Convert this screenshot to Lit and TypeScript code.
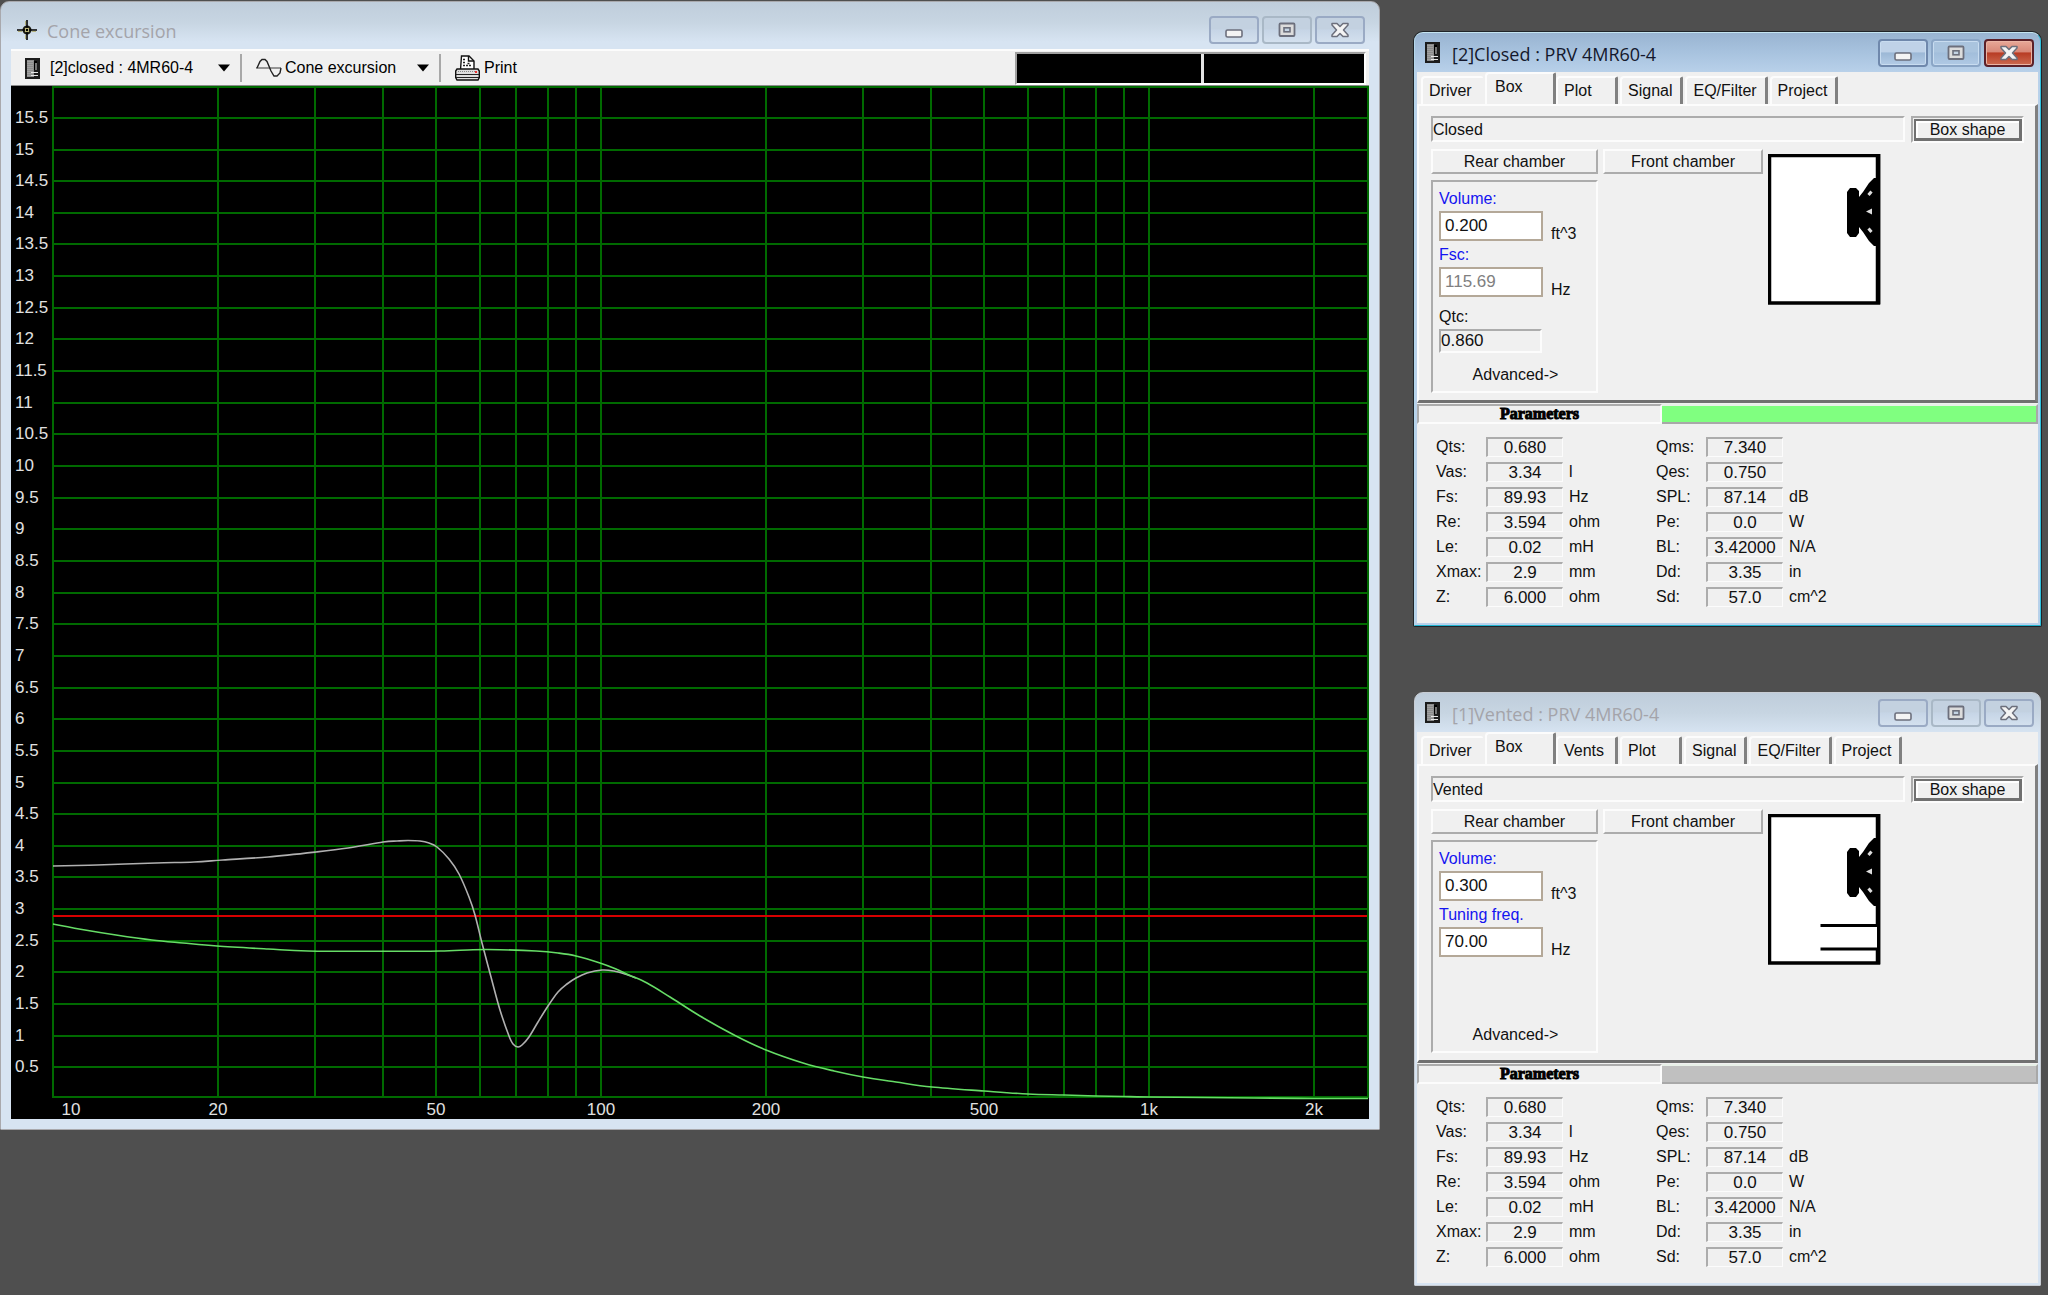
import { LitElement, html, svg, css, nothing } from "lit";
import { customElement, property } from "lit/decorators.js";
import { classMap } from "lit/directives/class-map.js";

type Point = [number, number];

interface Param {
  label: string;
  value: string;
  unit: string;
}

const boxIcon = html`<svg width="15" height="21" viewBox="0 0 15 21" aria-hidden="true">
  <rect width="15" height="21" fill="#1c1c1c" />
  <rect x="2" y="2" width="7" height="17" fill="#8c8c8c" />
  <path d="M3 3v15M5 3v15M7 3v15" stroke="#b4b4b4" stroke-dasharray="1 1" />
  <rect x="9" y="3" width="3" height="9" fill="#000" />
  <path d="M11 5v7M6 14.5h7M6 17.5h7" stroke="#e8e8e8" stroke-width="1" />
</svg>`;

const targetIcon = html`<svg width="20" height="20" viewBox="0 0 20 20" aria-hidden="true">
  <circle cx="10" cy="10" r="3.5" fill="#9a9660" stroke="#1a1a10" stroke-width="2" />
  <path d="M10 0v20M0 10h20" stroke="#000" stroke-width="1.6" />
  <path d="M8.6 1v4M8.6 15v4M1 11.4h4M15 11.4h4" stroke="#a8a050" stroke-width="0.8" />
  <rect x="8" y="8" width="4" height="4" fill="#b8b478" />
  <rect x="9" y="9" width="2" height="2" fill="#000" />
</svg>`;

const arrowIcon = html`<svg class="arrow" width="12" height="8" viewBox="0 0 12 8" aria-hidden="true">
  <path d="M0 0.5h12L6 7.5z" fill="#000" />
</svg>`;

const sineIcon = html`<svg width="26" height="20" viewBox="0 0 26 20" aria-hidden="true">
  <path d="M0 10h25" stroke="#777" stroke-width="1.3" />
  <path d="M1 10L4 3.500L6 1.500H9L11 3.500L15 13L18 18H21L24 15L25 10" fill="none" stroke="#222" stroke-width="1.400" />
</svg>`;

const printIcon = html`<svg width="25" height="26" viewBox="0 0 25 26" aria-hidden="true">
  <path d="M5.500 15L6.500 1H14L19 6V15z" fill="#fff" stroke="#111" stroke-width="1.400" />
  <path d="M13.500 1V6H19" fill="none" stroke="#111" stroke-width="1.400" />
  <path d="M8 4.500h3M8 7.500h3M8 10.500h8M12.500 8.500h3" stroke="#222" stroke-width="1.400" stroke-dasharray="2 1" />
  <path d="M2 14h21l1.300 2v6.500l-1.300 2.500H2L0.700 22.500v-6.500z" fill="#ddd" stroke="#111" stroke-width="1.400" />
  <path d="M3 16.500h18" stroke="#888" stroke-dasharray="1 1" />
  <path d="M1 19.500h23M1 22.500h23" stroke="#222" stroke-width="1.200" />
  <rect x="20" y="16" width="2" height="2" fill="#f03030" />
</svg>`;

@customElement("mdi-window")
export class MdiWindow extends LitElement {
  @property() heading = "";
  @property({ type: Boolean, reflect: true }) active = false;
  @property({ type: Boolean, reflect: true }) wide = false;

  static styles = css`
    :host {
      display: block;
      box-sizing: border-box;
      border: 1px solid #c8cdd4;
      border-radius: 9px 9px 1px 1px;
      background: linear-gradient(#bfcddb, #c7d5e2 20px, #d7e4f2 40px);
      padding: 0 2px 2px;
      overflow: hidden;
    }
    :host([wide]) {
      padding: 0 10px 10px;
      border-color: #a9a9ad;
    }
    :host([active]) {
      background: linear-gradient(#99b4d1, #a8c3df 20px, #b9d1ea 40px);
      border-color: #c4e4f0 #2ec0dc #22b4d0 #b4d8ec;
      box-shadow: 0 0 0 1px #202428;
    }
    .titlebar {
      display: flex;
      align-items: center;
      height: 39px;
      padding: 0 4px 0 8px;
    }
    :host([wide]) .titlebar {
      height: 47px;
      padding: 8px 4px 0 6px;
      box-sizing: border-box;
    }
    .title {
      flex: 1;
      margin: 0;
      padding: 3px 0 0 12px;
      font: 400 18px/24px "Open Sans", sans-serif;
      color: #a4a4aa;
      white-space: nowrap;
    }
    :host([wide]) .title {
      padding-left: 10px;
    }
    :host([active]) .title {
      color: #14182c;
    }
    .controls {
      display: flex;
      gap: 3px;
    }
    button {
      width: 50px;
      height: 28px;
      padding: 0;
      display: grid;
      place-items: center;
      border: 2px solid #9aaac4;
      border-radius: 4px;
      background: linear-gradient(#c3d1e0 45%, #c6d5e6 50%, #d3e0ee);
    }
    button.max {
      border-color: #a9b8c6;
    }
    :host([active]) button {
      border-color: #6f88ac;
      background: linear-gradient(#bfd2e8 45%, #9cb8d6 50%, #b4cce6);
      box-shadow: inset 0 0 0 1px #c8dcf0;
    }
    :host([active]) button.max {
      border-color: #8ba6c6;
      background: linear-gradient(#aac4de 45%, #a2bedb 50%, #b0c9e4);
    }
    :host([active]) button.close {
      border-color: #5c2028;
      background: linear-gradient(#e8a898, #d88878 45%, #b83c24 50%, #cc6a50);
      box-shadow: inset 0 0 0 1px #eab4a4;
    }
  `;

  render() {
    return html`
      <header class="titlebar">
        ${this.wide ? targetIcon : boxIcon}
        <h2 class="title">${this.heading}</h2>
        <div class="controls">
          <button type="button" class="min" aria-label="Minimize">
            <svg width="18" height="18" viewBox="0 0 18 18">
              <rect x="1" y="9" width="16" height="7" rx="1.500" fill="#f4f4f4" stroke="#6c6f7c" stroke-width="1.600" />
            </svg>
          </button>
          <button type="button" class="max" aria-label="Maximize">
            <svg width="18" height="18" viewBox="0 0 18 18">
              <rect x="1.500" y="2.500" width="15" height="12.500" rx="1" fill="#dcdcdc" stroke="#6c6f7c" stroke-width="1.800" />
              <rect x="6" y="6.800" width="6" height="4" fill="#c4d4e4" stroke="#6c6f7c" stroke-width="1.600" />
            </svg>
          </button>
          <button type="button" class="close" aria-label="Close">
            <svg width="18" height="18" viewBox="0 0 18 18">
              <path
                d="M1 2.500h5l3 3 3-3h5v1.500l-4.500 5 4.500 5v1.500h-5l-3-3-3 3H1V14l4.500-5L1 4z"
                fill="#f4f4f4"
                stroke="#6c6f7c"
                stroke-width="1.500"
                stroke-linejoin="round"
              />
            </svg>
          </button>
        </div>
      </header>
      <slot></slot>
    `;
  }
}

const ventedCurve: Point[] = [
  [53, 866], [97, 865], [156, 863], [194, 862], [223, 860], [268, 857], [316, 852], [348, 848],
  [383, 842], [397, 841], [408, 840.500], [420, 841], [429, 843], [437, 847], [449, 859], [459, 874],
  [469, 897], [475, 915], [482, 943], [491, 977], [500, 1010], [509, 1036], [513, 1044],
  [518, 1047], [522, 1045], [529, 1037], [538, 1022], [548, 1006], [558, 992], [567, 984],
  [576, 978], [587, 973], [602, 970], [614, 971], [625, 974], [636, 978],
];

const closedCurve: Point[] = [
  [53, 924], [85, 930], [116, 935], [152, 940], [183, 943], [217, 946], [268, 949], [308, 951],
  [384, 951.300], [440, 951], [473, 949.700], [500, 949.700], [536, 951], [558, 953], [576, 956], [600, 963],
  [616, 969], [629, 975], [647, 983], [670, 997], [700, 1016], [736, 1036], [766, 1050],
  [803, 1063], [834, 1071], [863, 1077], [896, 1082], [932, 1087], [984, 1091], [1028, 1094],
  [1064, 1095], [1096, 1096], [1124, 1096.500], [1149, 1097], [1254, 1098], [1314, 1098.500], [1368, 1098.500],
];

/** Catmull-Rom spline through the points, written as cubic Béziers. */
function smoothPath(points: Point[]): string {
  let d = `M${points[0][0]} ${points[0][1]}`;
  for (let i = 0; i < points.length - 1; i++) {
    const a = points[Math.max(i - 1, 0)];
    const b = points[i];
    const c = points[i + 1];
    const e = points[Math.min(i + 2, points.length - 1)];
    d += `C${b[0] + (c[0] - a[0]) / 6} ${b[1] + (c[1] - a[1]) / 6} ${c[0] - (e[0] - b[0]) / 6} ${
      c[1] - (e[1] - b[1]) / 6
    } ${c[0]} ${c[1]}`;
  }
  return d;
}

@customElement("excursion-plot")
export class ExcursionPlot extends LitElement {
  static styles = css`
    :host {
      display: block;
      background: #000;
    }
    .plot {
      display: block;
      width: 100%;
      height: auto;
    }
    .grid {
      stroke: #006a00;
      stroke-width: 2;
      shape-rendering: crispEdges;
    }
    .limit {
      stroke: #d80000;
      stroke-width: 2;
      shape-rendering: crispEdges;
    }
    .curve {
      fill: none;
      stroke-width: 1.6;
    }
    .vented {
      stroke: #b0b0b0;
    }
    .closed {
      stroke: #66dc66;
    }
    text {
      font: 17px "Liberation Sans", Arial, sans-serif;
      fill: #e0e0e0;
    }
    .freq {
      text-anchor: middle;
    }
  `;

  private x(freq: number) {
    return Math.round(53 + 548.2 * Math.log10(freq / 10));
  }

  private y(mm: number) {
    return mm === 0 ? 1097 : Math.round(1099 - mm * 63.3);
  }

  render() {
    const freqs = [10, 20, 30, 40, 50, 60, 70, 80, 90, 100, 200, 300, 400, 500, 600, 700, 800, 900, 1000, 2000];
    const levels = Array.from({ length: 33 }, (_, i) => i / 2);
    const freqLabels: [number, string][] = [
      [20, "20"], [50, "50"], [100, "100"], [200, "200"], [500, "500"], [1000, "1k"], [2000, "2k"],
    ];
    return html`
      <svg class="plot" viewBox="11 86 1358 1033" role="img" aria-label="Cone excursion in mm against frequency in Hz">
        <g class="grid">
          ${freqs.map((f) => svg`<line x1=${this.x(f)} x2=${this.x(f)} y1="87" y2="1098" />`)}
          <line x1="1368" x2="1368" y1="87" y2="1098" />
          ${levels.map((v) => {
            const y = v === 16 ? 87 : this.y(v);
            return svg`<line x1="52" x2="1369" y1=${y} y2=${y} />`;
          })}
        </g>
        <line class="limit" x1="53" x2="1367" y1="916" y2="916" />
        <path class="curve vented" d=${smoothPath(ventedCurve)} />
        <path class="curve closed" d=${smoothPath(closedCurve)} />
        ${levels.slice(1, 32).map((v) => svg`<text x="15" y=${this.y(v) + 5}>${v}</text>`)}
        <text class="freq" x="71" y="1115">10</text>
        ${freqLabels.map(([f, t]) => svg`<text class="freq" x=${this.x(f)} y="1115">${t}</text>`)}
      </svg>
    `;
  }
}

@customElement("plot-toolbar")
export class PlotToolbar extends LitElement {
  static styles = css`
    :host {
      display: flex;
      align-items: center;
      box-sizing: border-box;
      height: 37px;
      padding: 0 3px 0 14px;
      background: #f0f0f0;
      border-top: 2px solid #fcfcfc;
      border-bottom: 1px solid #8c8c8c;
      font: 16px/20px "Liberation Sans", Arial, sans-serif;
      color: #000;
    }
    .picker {
      display: flex;
      align-items: center;
    }
    .picker svg {
      flex: none;
    }
    select {
      appearance: none;
      border: 0;
      padding: 0;
      background: none;
      font: inherit;
      color: inherit;
    }
    .project select {
      width: 168px;
      margin-left: 10px;
    }
    .quantity select {
      width: 132px;
      margin-left: 3px;
    }
    .sep {
      width: 2px;
      height: 28px;
      margin: 0 14px 0 10px;
      background: #a8a8a8;
    }
    .print {
      display: flex;
      align-items: center;
      gap: 4px;
      padding: 0;
      border: 0;
      background: none;
      font: inherit;
      color: inherit;
    }
    .meters {
      flex: none;
      display: grid;
      grid-template-columns: 184px 160px;
      gap: 3px;
      box-sizing: border-box;
      height: 33px;
      margin-left: auto;
      background: #e4e4e4;
      border: 2px solid;
      border-color: #a0a0a0 #fff #fff #a0a0a0;
    }
    .meter {
      background: #000;
    }
  `;

  render() {
    return html`
      <label class="picker project">
        ${boxIcon}
        <select aria-label="Project">
          <option>[2]closed : 4MR60-4</option>
          <option>[1]vented : 4MR60-4</option>
        </select>
        ${arrowIcon}
      </label>
      <span class="sep"></span>
      <label class="picker quantity">
        ${sineIcon}
        <select aria-label="Plot type">
          <option>Cone excursion</option>
        </select>
        ${arrowIcon}
      </label>
      <span class="sep"></span>
      <button type="button" class="print">${printIcon}Print</button>
      <div class="meters"><span class="meter"></span><span class="meter"></span></div>
    `;
  }
}

const params: Param[][] = [
  [
    { label: "Qts:", value: "0.680", unit: "" },
    { label: "Vas:", value: "3.34", unit: "l" },
    { label: "Fs:", value: "89.93", unit: "Hz" },
    { label: "Re:", value: "3.594", unit: "ohm" },
    { label: "Le:", value: "0.02", unit: "mH" },
    { label: "Xmax:", value: "2.9", unit: "mm" },
    { label: "Z:", value: "6.000", unit: "ohm" },
  ],
  [
    { label: "Qms:", value: "7.340", unit: "" },
    { label: "Qes:", value: "0.750", unit: "" },
    { label: "SPL:", value: "87.14", unit: "dB" },
    { label: "Pe:", value: "0.0", unit: "W" },
    { label: "BL:", value: "3.42000", unit: "N/A" },
    { label: "Dd:", value: "3.35", unit: "in" },
    { label: "Sd:", value: "57.0", unit: "cm^2" },
  ],
];

@customElement("box-panel")
export class BoxPanel extends LitElement {
  @property({ type: Boolean }) vented = false;

  static styles = css`
    :host {
      display: block;
      background: #f0f0f0;
      font: 16px/20px "Liberation Sans", Arial, sans-serif;
      color: #111;
    }
    * {
      box-sizing: border-box;
    }
    button,
    input {
      font: inherit;
      color: inherit;
      margin: 0;
    }
    .tabs {
      display: flex;
      align-items: flex-end;
      gap: 2px;
      height: 32px;
      padding: 0 4px;
    }
    .tab {
      height: 28px;
      min-width: 62px;
      padding: 0 8px 0 6px;
      text-align: left;
      background: #f0f0f0;
      border: solid;
      border-width: 2px 3px 0 2px;
      border-color: #fcfcfc #808080 #fcfcfc #fcfcfc;
      border-radius: 4px 2px 0 0;
      white-space: nowrap;
    }
    .tab.first {
      border-right: 0;
    }
    .tab.selected {
      height: 32px;
      width: 71px;
      margin-right: -2px;
      padding: 0 8px 4px;
    }
    .page {
      height: 299px;
      padding: 10px 11px 0 12px;
      border: solid;
      border-width: 2px 3px 3px 2px;
      border-color: #fcfcfc #808080 #707070 #fcfcfc;
    }
    .row {
      display: flex;
      gap: 6px;
    }
    .sunken {
      border: 2px solid;
      border-color: #acacac #fcfcfc #fcfcfc #acacac;
      background: #f0f0f0;
    }
    .name {
      flex: 1;
      min-width: 0;
      height: 26px;
      padding: 2px 0 0;
    }
    .shape {
      width: 113px;
      height: 27px;
      padding: 1px 0 0 1px;
    }
    .shape button {
      display: block;
      width: 100%;
      height: 100%;
      padding: 0;
      line-height: 18px;
      background: #f0f0f0;
      border: solid #707070;
      border-width: 2px 3px 3px 2px;
      box-shadow: inset 1px 1px 0 1px #fff;
    }
    .body {
      display: grid;
      grid-template-columns: 167px 160px 1fr;
      gap: 5px;
      margin-top: 6px;
    }
    .chamber {
      display: block;
      height: 25px;
      width: 100%;
      padding: 0;
      background: #f0f0f0;
      border: 2px solid;
      border-color: #fcfcfc #acacac #acacac #fcfcfc;
    }
    .group {
      height: 213px;
      margin-top: 6px;
      padding: 7px 6px 0;
      display: flex;
      flex-direction: column;
    }
    .label {
      height: 22px;
      color: #1414f0;
    }
    .label.plain {
      color: #111;
      margin-top: 6px;
    }
    .entry {
      display: flex;
      align-items: flex-end;
      gap: 8px;
      height: 30px;
      margin-bottom: 4px;
    }
    .entry input {
      width: 104px;
      height: 30px;
      padding: 0 0 0 4px;
      border: 2px solid #b4a898;
      background: #fff;
      font-size: 17px;
    }
    .entry input:disabled {
      color: #808080;
    }
    .entry span {
      line-height: 14px;
    }
    .readout {
      display: block;
      width: 103px;
      height: 24px;
      font-size: 17px;
    }
    .advanced {
      margin-top: auto;
      margin-bottom: 6px;
      padding: 0 0 0 2px;
      border: 0;
      background: none;
    }
    .drawing {
      display: block;
      margin-top: 5px;
    }
    .strip {
      display: grid;
      grid-template-columns: 245px 1fr;
      height: 20px;
      margin-top: 1px;
    }
    .strip h3 {
      margin: 0;
      font: bold 16px/15px "Liberation Serif", "Times New Roman", serif;
      -webkit-text-stroke: 1px #000;
      text-align: center;
      color: #000;
    }
    .swatch {
      background: #80ff80;
      border: solid;
      border-width: 2px 2px 2px 0;
      border-color: #e8f0e8 #a8a8a8 #a8a8a8;
    }
    .swatch.grey {
      background: #c0c0c0;
    }
    .params {
      display: flex;
      gap: 20px;
      padding: 13px 18px 16px 19px;
    }
    .column {
      width: 200px;
      display: grid;
      grid-template-columns: 50px 77px 1fr;
      column-gap: 0;
      row-gap: 5px;
    }
    .column .val {
      height: 20px;
      font-size: 17px;
      line-height: 18px;
      text-align: center;
      border-width: 2px 1px 1px 2px;
    }
    .column span {
      padding-left: 6px;
    }
    .column label {
      white-space: nowrap;
    }
  `;

  private renderDrawing() {
    return html`<svg class="drawing" width="113" height="151" viewBox="0 0 113 151" role="img" aria-label="Box cross-section">
      <rect x="1.500" y="1.500" width="109" height="147.500" fill="#fff" stroke="#000" stroke-width="3.500" />
      <path d="M110 0V150" stroke="#000" stroke-width="4.500" />
      <path
        d="M79 38l3-4h6l3 3v6l4-5 6-9 5-5h4v68h-4l-5-5-6-9-4-5v6l-3 4h-6l-3-4z"
        fill="#000"
      />
      <path d="M100.500 41l3-3.500M100.500 74.500l3 3.500" stroke="#ddd" stroke-width="3" />
      <path d="M98 57.500l6-3v6z" fill="#ddd" />
      ${this.vented
        ? svg`<rect x="106" y="111" width="3" height="24" fill="#fff" />
            <path d="M52.500 111.500H110M52.500 135H110" stroke="#000" stroke-width="3" />`
        : nothing}
    </svg>`;
  }

  render() {
    const tabs = this.vented
      ? ["Driver", "Box", "Vents", "Plot", "Signal", "EQ/Filter", "Project"]
      : ["Driver", "Box", "Plot", "Signal", "EQ/Filter", "Project"];
    return html`
      <nav class="tabs" role="tablist">
        ${tabs.map(
          (t) => html`<button
            type="button"
            role="tab"
            aria-selected=${t === "Box" ? "true" : "false"}
            class=${classMap({ tab: true, first: t === "Driver", selected: t === "Box" })}
          >${t}</button>`,
        )}
      </nav>
      <section class="page">
        <div class="row">
          <input class="name sunken" aria-label="Box type" readonly .value=${this.vented ? "Vented" : "Closed"} />
          <div class="shape sunken"><button type="button">Box shape</button></div>
        </div>
        <div class="body">
          <div>
            <button type="button" class="chamber">Rear chamber</button>
            <div class="group sunken">
              <label class="label" for="volume">Volume:</label>
              <div class="entry">
                <input id="volume" .value=${this.vented ? "0.300" : "0.200"} /><span>ft^3</span>
              </div>
              <label class="label" for="freq">${this.vented ? "Tuning freq." : "Fsc:"}</label>
              <div class="entry">
                <input id="freq" ?disabled=${!this.vented} .value=${this.vented ? "70.00" : "115.69"} /><span>Hz</span>
              </div>
              ${this.vented
                ? nothing
                : html`<label class="label plain" for="qtc">Qtc:</label>
                    <output id="qtc" class="readout sunken">0.860</output>`}
              <button type="button" class="advanced">Advanced-&gt;</button>
            </div>
          </div>
          <div><button type="button" class="chamber">Front chamber</button></div>
          ${this.renderDrawing()}
        </div>
      </section>
      <div class="strip">
        <h3 class="sunken">Parameters</h3>
        <div class=${classMap({ swatch: true, grey: this.vented })}></div>
      </div>
      <div class="params">
        ${params.map(
          (col, c) => html`<div class="column">
            ${col.map(
              (p, i) => html`<label for="p${c}${i}">${p.label}</label>
                <output class="val sunken" id="p${c}${i}">${p.value}</output>
                <span>${p.unit}</span>`,
            )}
          </div>`,
        )}
      </div>
    `;
  }
}

@customElement("app-root")
export class AppRoot extends LitElement {
  static styles = css`
    :host {
      display: block;
      background: #4f4f4f;
    }
    .desktop {
      display: grid;
      grid-template-columns: minmax(0, 1fr) 627px;
      column-gap: 34px;
      align-items: start;
      box-sizing: border-box;
      min-height: 100vh;
      padding: 1px 7px 8px 0;
    }
    .side {
      display: grid;
      gap: 66px;
      padding-top: 31px;
    }
  `;

  render() {
    return html`
      <main class="desktop">
        <mdi-window wide heading="Cone excursion">
          <plot-toolbar></plot-toolbar>
          <excursion-plot></excursion-plot>
        </mdi-window>
        <div class="side">
          <mdi-window active heading="[2]Closed : PRV 4MR60-4"><box-panel></box-panel></mdi-window>
          <mdi-window heading="[1]Vented : PRV 4MR60-4"><box-panel vented></box-panel></mdi-window>
        </div>
      </main>
    `;
  }
}
